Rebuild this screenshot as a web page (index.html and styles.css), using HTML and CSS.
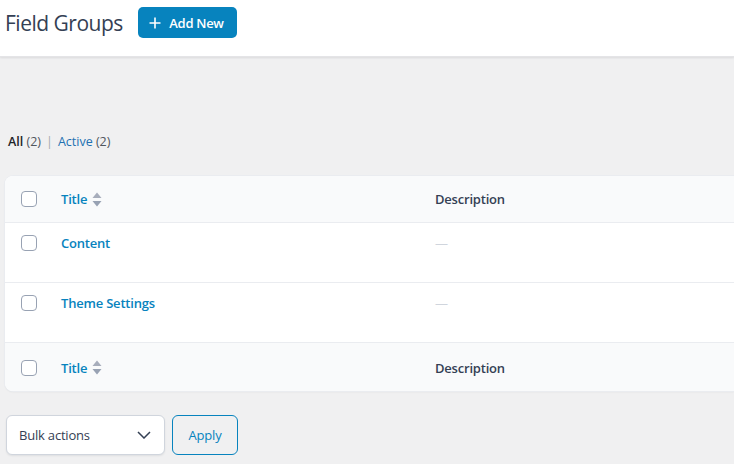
FILE: index.html
```html
<!DOCTYPE html>
<html>
<head>
<meta charset="utf-8">
<link rel="stylesheet" href="styles.css">
</head>
<body>
<header class="topbar">
  <h1 class="page-title">Field Groups</h1>
  <a class="add-btn" href="#">
    <svg class="plus" width="12" height="12" viewBox="0 0 12 12"><path d="M6 0.5V11.5M0.5 6H11.5" stroke="#fff" stroke-width="1.6" fill="none"/></svg>
    <span>Add New</span>
  </a>
</header>
<main class="content">
  <ul class="subsubsub">
    <li class="current">All <span class="count">(2)</span></li>
    <li class="sep">|</li>
    <li><a href="#">Active <span class="count">(2)</span></a></li>
  </ul>
  <div class="table">
    <div class="row head">
      <div class="cb"><span class="box"></span></div>
      <div class="col-title"><a href="#">Title</a><span class="sort"><svg width="10" height="15" viewBox="0 0 10 15"><path d="M5 0.5L9.5 6H0.5Z" fill="#a7adbb"/><path d="M5 14.5L9.5 9H0.5Z" fill="#98a2b3"/></svg></span></div>
      <div class="col-desc">Description</div>
    </div>
    <div class="row body">
      <div class="cb"><span class="box"></span></div>
      <div class="col-title"><a href="#">Content</a></div>
      <div class="col-desc"><span class="dash">—</span></div>
    </div>
    <div class="row body">
      <div class="cb"><span class="box"></span></div>
      <div class="col-title"><a href="#">Theme Settings</a></div>
      <div class="col-desc"><span class="dash">—</span></div>
    </div>
    <div class="row foot">
      <div class="cb"><span class="box"></span></div>
      <div class="col-title"><a href="#">Title</a><span class="sort"><svg width="10" height="15" viewBox="0 0 10 15"><path d="M5 0.5L9.5 6H0.5Z" fill="#a7adbb"/><path d="M5 14.5L9.5 9H0.5Z" fill="#98a2b3"/></svg></span></div>
      <div class="col-desc">Description</div>
    </div>
  </div>
  <div class="tablenav">
    <div class="select">
      <span>Bulk actions</span>
      <svg width="14" height="8" viewBox="0 0 14 8"><path d="M1 1L7 7L13 1" stroke="#344054" stroke-width="1.5" fill="none"/></svg>
    </div>
    <button class="apply">Apply</button>
  </div>
</main>
</body>
</html>
```
FILE: styles.css
```css
* { box-sizing: border-box; }
html, body { margin: 0; padding: 0; }
body {
  background: #f0f0f1;
  font-family: "Open Sans", "Noto Sans", sans-serif;
  font-size: 13px;
  color: #344054;
  width: 734px;
  height: 464px;
  overflow: hidden;
}
a { text-decoration: none; }
.topbar {
  height: 57px;
  background: #fff;
  display: flex;
  align-items: flex-start;
  padding-left: 5px;
  box-shadow: 0 1px 2px rgba(16, 24, 40, 0.10);
  border-bottom: 1px solid #e4e4e7;
}
.page-title {
  margin: 0;
  width: 133px;
  font-size: 21px;
  font-weight: 400;
  line-height: 30px;
  padding-top: 8px;
  color: #344054;
  letter-spacing: -0.5px;
}
.add-btn {
  margin-top: 7px;
  width: 99px;
  height: 31px;
  background: #0783be;
  border-radius: 5px;
  display: flex;
  align-items: center;
  justify-content: center;
  gap: 8px;
  color: #fff;
  font-weight: 600;
  font-size: 13px;
  letter-spacing: -0.3px;
  padding-right: 2px;
}
.plus { display: block; }
.content { padding: 0 0 0 5px; }
.subsubsub {
  list-style: none;
  margin: 0;
  padding: 75px 0 0 3px;
  display: flex;
  gap: 5px;
  height: 119px;
  line-height: 20px;
  font-size: 12.5px;
  color: #50575e;
}
.subsubsub .current { color: #1d2327; font-weight: 600; }
.subsubsub .current .count { font-weight: 400; color: #50575e; }
.subsubsub .sep { color: #a7aaad; }
.subsubsub a { color: #2271b1; }
.subsubsub a .count { color: #50575e; }
.table {
  background: #fff;
  border-radius: 8px 0 0 8px;
  box-shadow: 0 0 0 1px #eaecf0, 0 1px 2px rgba(16,24,40,0.08);
  overflow: hidden;
}
.row {
  display: flex;
  align-items: flex-start;
}
.row.head { background: #f9fafb; height: 47px; border-bottom: 1px solid #eaecf0; align-items: center; }
.row.body { height: 60px; padding-top: 10px; border-bottom: 1px solid #eaecf0; }
.row.foot { background: #f9fafb; height: 48px; padding-top: 1px; align-items: center; }
.cb { width: 56px; padding-left: 16px; display: flex; align-items: center; height: 20px; }
.box {
  display: block;
  width: 16px;
  height: 16px;
  border: 1px solid #98a2b3;
  border-radius: 4px;
  background: #fff;
}
.col-title {
  width: 374px;
  display: flex;
  align-items: center;
  gap: 5px;
  line-height: 20px;
}
.col-title a {
  color: #0783be;
  font-weight: 600;
  letter-spacing: -0.2px;
}
.sort svg { display: block; }
.col-desc {
  font-weight: 600;
  color: #344054;
  line-height: 20px;
  letter-spacing: -0.2px;
}
.dash { color: #d0d5dd; font-weight: 400; }
.tablenav {
  display: flex;
  gap: 7px;
  margin-top: 24px;
  padding-left: 1px;
}
.select {
  width: 159px;
  height: 40px;
  background: #fff;
  border: 1px solid #d0d5dd;
  border-radius: 6px;
  display: flex;
  align-items: center;
  justify-content: space-between;
  padding: 0 13px 0 12px;
  color: #344054;
  font-size: 13px;
  letter-spacing: -0.2px;
  box-shadow: 0 1px 2px rgba(16,24,40,0.08);
}
.select svg { display: block; }
.apply {
  width: 66px;
  height: 40px;
  background: transparent;
  border: 1px solid #0783be;
  border-radius: 6px;
  color: #0783be;
  font-family: inherit;
  font-size: 13px;
  letter-spacing: -0.2px;
  padding: 0;
}
```
